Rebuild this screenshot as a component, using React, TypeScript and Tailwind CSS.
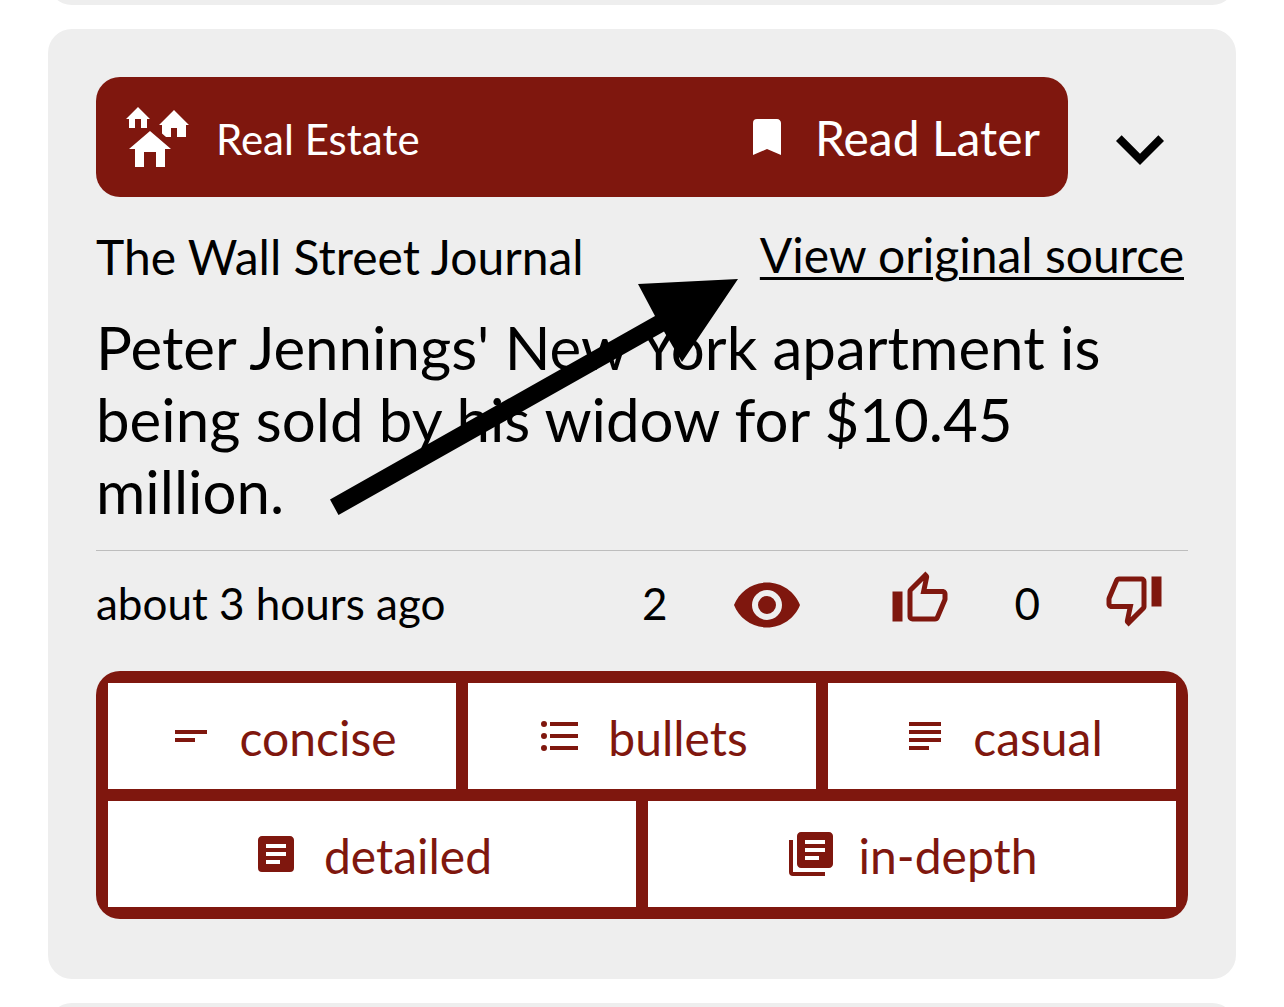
import type { ReactNode } from "react";

const icons = {
  homeGroup:
    "M17,16H15V22H12V17H8V22H5V16H3L10,10L17,16M6,2L10,6H9V9H7V6H5V9H3V6H2L6,2M18,3L23,8H22V12H19V9H17V12H15.34L14,10.87V8H13L18,3Z",
  bookmark: "M17,3H7A2,2 0 0,0 5,5V21L12,18L19,21V5C19,3.89 18.1,3 17,3Z",
  chevronDown: "M7.41,8.58L12,13.17L16.59,8.58L18,10L12,16L6,10L7.41,8.58Z",
  eye: "M12,9A3,3 0 0,0 9,12A3,3 0 0,0 12,15A3,3 0 0,0 15,12A3,3 0 0,0 12,9M12,17A5,5 0 0,1 7,12A5,5 0 0,1 12,7A5,5 0 0,1 17,12A5,5 0 0,1 12,17M12,4.5C7,4.5 2.73,7.61 1,12C2.73,16.39 7,19.5 12,19.5C17,19.5 21.27,16.39 23,12C21.27,7.61 17,4.5 12,4.5Z",
  thumbUp:
    "M5,9V21H1V9H5M9,21A2,2 0 0,1 7,19V9C7,8.45 7.22,7.95 7.59,7.59L14.17,1L15.23,2.06C15.5,2.33 15.67,2.7 15.67,3.11L15.64,3.43L14.69,8H21C22.11,8 23,8.9 23,10V12C23,12.26 22.95,12.5 22.86,12.73L19.84,19.78C19.54,20.5 18.83,21 18,21H9M9,19H18.03L21,12V10H12.21L13.34,4.68L9,9.03V19Z",
  thumbDown:
    "M19,15V3H23V15H19M15,3A2,2 0 0,1 17,5V15C17,15.55 16.78,16.05 16.41,16.41L9.83,23L8.77,21.94C8.5,21.67 8.33,21.3 8.33,20.88L8.36,20.57L9.31,16H3C1.89,16 1,15.1 1,14V12C1,11.74 1.05,11.5 1.14,11.27L4.16,4.22C4.46,3.5 5.17,3 6,3H15M15,5H5.97L3,12V14H11.78L10.65,19.32L15,14.97V5Z",
  shortText: "M4,9H20V11H4V9M4,13H14V15H4V13Z",
  bullets:
    "M7,5H21V7H7V5M7,13V11H21V13H7M4,4.5A1.5,1.5 0 0,1 5.5,6A1.5,1.5 0 0,1 4,7.5A1.5,1.5 0 0,1 2.5,6A1.5,1.5 0 0,1 4,4.5M4,10.5A1.5,1.5 0 0,1 5.5,12A1.5,1.5 0 0,1 4,13.5A1.5,1.5 0 0,1 2.5,12A1.5,1.5 0 0,1 4,10.5M7,19V17H21V19H7M4,16.5A1.5,1.5 0 0,1 5.5,18A1.5,1.5 0 0,1 4,19.5A1.5,1.5 0 0,1 2.5,18A1.5,1.5 0 0,1 4,16.5Z",
  paragraph: "M4,5H20V7H4V5M4,9H20V11H4V9M4,13H20V15H4V13M4,17H14V19H4V17Z",
  textBox:
    "M14,17H7V15H14M17,13H7V11H17M17,9H7V7H17M19,3H5C3.89,3 3,3.89 3,5V19A2,2 0 0,0 5,21H19A2,2 0 0,0 21,19V5C21,3.89 20.1,3 19,3Z",
  textBoxMultiple:
    "M16,15H9V13H16M19,11H9V9H19M19,7H9V5H19M21,1H7C5.89,1 5,1.89 5,3V17C5,18.11 5.9,19 7,19H21C22.11,19 23,18.11 23,17V3C23,1.89 22.1,1 21,1M3,5V21H19V23H3A2,2 0 0,1 1,21V5H3Z",
};

type IconName = keyof typeof icons;

function Icon({ name, className }: { name: IconName; className: string }) {
  return (
    <svg viewBox="0 0 24 24" fill="currentColor" aria-hidden="true" className={`shrink-0 ${className}`}>
      <path d={icons[name]} />
    </svg>
  );
}

function SummaryButton({ icon, children }: { icon: IconName; children: ReactNode }) {
  return (
    <button type="button" className="flex h-[106px] flex-1 items-center justify-center gap-6 bg-white text-5xl">
      <Icon name={icon} className="size-12" />
      <span className="pt-1">{children}</span>
    </button>
  );
}

export default function App() {
  return (
    <main className="flex flex-col gap-6 overflow-hidden bg-white px-12 font-['Lato',sans-serif] text-black">
      <div className="flex h-[5px] flex-col justify-end overflow-hidden">
        <div className="h-12 shrink-0 rounded-3xl bg-[#eeeeee]" />
      </div>

      <article className="relative rounded-3xl bg-[#eeeeee] px-12 pt-12 pb-[60px]">
        <header className="flex">
          <div className="flex h-[120px] flex-1 items-center justify-between rounded-3xl bg-[#7f170e] pr-7 pl-6 text-white">
            <div className="flex items-center gap-6 text-[42px]">
              <Icon name="homeGroup" className="size-[72px]" />
              <span className="pt-1">Real Estate</span>
            </div>
            <button type="button" className="flex items-center gap-6 text-5xl">
              <Icon name="bookmark" className="size-12" />
              <span className="pt-0.5">Read Later</span>
            </button>
          </div>
          <button type="button" aria-label="Collapse" className="pt-6 pl-6">
            <Icon name="chevronDown" className="size-24" />
          </button>
        </header>

        <div className="flex items-start justify-between pt-6 pr-1 pb-[18px] text-5xl">
          <p className="leading-[72px]">The Wall Street Journal</p>
          <a href="#source" className="leading-[68px] underline decoration-3 underline-offset-4">
            View original source
          </a>
        </div>

        <h2 className="text-6xl leading-[72px]">
          Peter Jennings' New York apartment is being sold by his widow for $10.45 million.
        </h2>

        <div className="mt-[23px] flex h-[121px] items-start border-t border-[#bdbdbd] pt-[18px] text-[44px] leading-[68px]">
          <p className="flex-1">about 3 hours ago</p>
          <span>2</span>
          <Icon name="eye" className="ml-16 size-[72px] text-[#7f170e]" />
          <button type="button" aria-label="Like" className="ml-[87px] text-[#7f170e]">
            <Icon name="thumbUp" className="size-[60px]" />
          </button>
          <span className="ml-16">0</span>
          <button type="button" aria-label="Dislike" className="mr-6 ml-16 text-[#7f170e]">
            <Icon name="thumbDown" className="size-[60px]" />
          </button>
        </div>

        <div className="flex flex-col gap-3 rounded-3xl bg-[#7f170e] p-3 text-[#7f170e]">
          <div className="flex gap-3">
            <SummaryButton icon="shortText">concise</SummaryButton>
            <SummaryButton icon="bullets">bullets</SummaryButton>
            <SummaryButton icon="paragraph">casual</SummaryButton>
          </div>
          <div className="flex gap-3">
            <SummaryButton icon="textBox">detailed</SummaryButton>
            <SummaryButton icon="textBoxMultiple">in-depth</SummaryButton>
          </div>
        </div>

        <svg
          viewBox="0 0 410 238"
          aria-hidden="true"
          className="pointer-events-none absolute top-[249px] left-[281px] h-[238px] w-[410px]"
        >
          <path d="M1,221.5L326,38L309,6L409,1L353,84L335,53.5L9.5,237Z" />
        </svg>
      </article>

      <div className="h-1 overflow-hidden">
        <div className="h-12 rounded-3xl bg-[#eeeeee]" />
      </div>
    </main>
  );
}
